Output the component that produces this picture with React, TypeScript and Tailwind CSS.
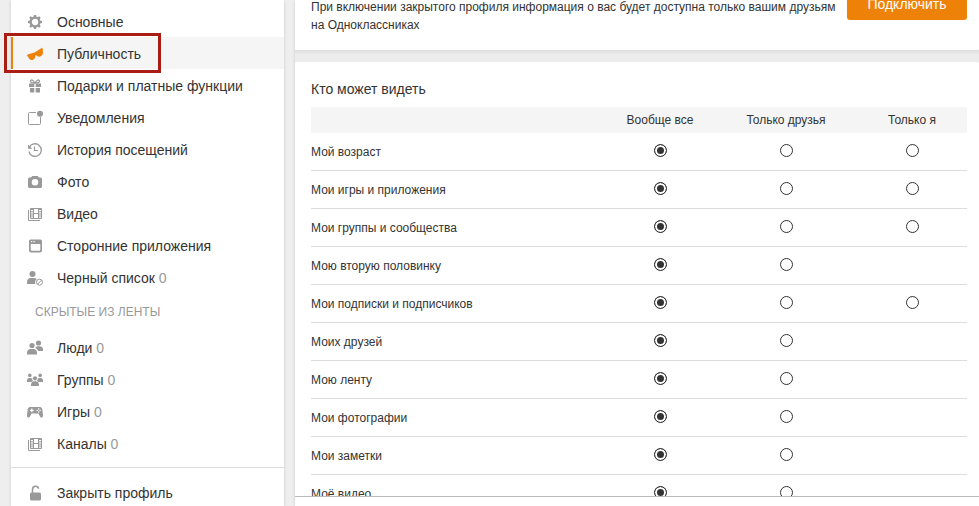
import React from 'react';

type MenuItem = {
    label: string;
    icon: React.ReactNode;
    count?: number;
    active?: boolean;
};

const Icon = ({ children }: { children: React.ReactNode }) => (
    <svg viewBox="0 0 16 16" className="size-4 shrink-0" fill="currentColor" aria-hidden="true">
        {children}
    </svg>
);

const gearTeeth = [0, 45, 90, 135, 180, 225, 270, 315];

const GearIcon = () => (
    <Icon>
        {gearTeeth.map((angle) => (
            <path key={angle} d="M6.3 3.6 6.9 1h2.200l.6 2.600z" transform={`rotate(${angle} 8 8)`} />
        ))}
        <circle cx="8" cy="8" r="4.300" fill="none" stroke="currentColor" strokeWidth="2.200" />
    </Icon>
);

const GlassesIcon = () => (
    <Icon>
        <path d="M0 9.500c.2-.8.6-1.100 1.400-1.300L7.500 6.600l2-1.400L14.700 2c.5-.3.800-.1.900.4l.4 3.600c0 2.600-1.200 4.200-3 4.600-1.700.4-3-.2-3.900-1.600l-.7.400c.1 2.200-.8 3.900-2.700 4.500-2 .6-3.500-.3-4.200-2.300z" />
    </Icon>
);

const GiftIcon = () => (
    <Icon>
        <path d="M2 5.500h5.300V9H2zM8.700 5.500H14V9H8.700zM3 10h4.300v4.500H3zM8.700 10H13v4.500H8.700z" />
        <path d="M7.600 5C4.500 5 3.500 4.300 3.500 3.200c0-1.900 3.300-1.700 4.100 1.800zM8.400 5c3.100 0 4.100-.7 4.100-1.800 0-1.900-3.300-1.700-4.100 1.800z" fill="none" stroke="currentColor" strokeWidth="1.300" />
    </Icon>
);

const NotifyIcon = () => (
    <Icon>
        <path d="M9 2.500H2.500a1 1 0 0 0-1 1v10a1 1 0 0 0 1 1h10a1 1 0 0 0 1-1V7" fill="none" stroke="currentColor" />
        <circle cx="13" cy="3.700" r="3" />
    </Icon>
);

const HistoryIcon = () => (
    <Icon>
        <path d="M2.300 5.500a6.300 6.300 0 1 1-.4 4" fill="none" stroke="currentColor" strokeWidth="1.300" />
        <path d="M1 2.500v4.300h4.300z" />
        <path d="M7.500 4.500v4h3.500" fill="none" stroke="currentColor" strokeWidth="1.200" />
    </Icon>
);

const CameraIcon = () => (
    <Icon>
        <path fillRule="evenodd" d="M5.200 2h5.600l1.200 1.500h1.500A1.500 1.500 0 0 1 15 5v7.500a1.500 1.500 0 0 1-1.500 1.500h-11A1.500 1.500 0 0 1 1 12.500V5a1.500 1.500 0 0 1 1.500-1.500H4zM8 5a3.300 3.300 0 1 0 0 6.600A3.300 3.300 0 0 0 8 5z" />
    </Icon>
);

const FilmIcon = () => (
    <Icon>
        <path d="M1.500 4v10.500H13" fill="none" stroke="currentColor" />
        <path d="M3.500 2.500h11v10h-11zM6.500 2.500v10M11.500 2.500v10M6.500 7.500h5" fill="none" stroke="currentColor" />
        <path d="M5 3v9.500M13 3v9.500" fill="none" stroke="currentColor" strokeWidth="2" strokeDasharray="1 1.200" />
    </Icon>
);

const WindowIcon = () => (
    <Icon>
        <path fillRule="evenodd" d="M3.500 1.500h10A1.500 1.500 0 0 1 15 3v9.500a2 2 0 0 1-2 2H4a2 2 0 0 1-2-2V3a1.500 1.500 0 0 1 1.500-1.500zM3.700 6v5.800a1 1 0 0 0 1 1h7.600a1 1 0 0 0 1-1V6zM4 3v1.200h1.200V3zM6.500 3v1.200h1.200V3z" />
    </Icon>
);

const BlockedIcon = () => (
    <Icon>
        <circle cx="5.500" cy="4" r="3" />
        <path d="M0 14v-2c0-2.500 1.800-4 4-4h3c1.200 0 2.200.4 2.900 1.100A4.500 4.500 0 0 0 8.300 14z" />
        <circle cx="12.500" cy="12.200" r="3" fill="none" stroke="currentColor" />
        <path d="m10.500 14.200 4-4" stroke="currentColor" />
    </Icon>
);

const PeopleIcon = () => (
    <Icon>
        <circle cx="5" cy="5.500" r="2.600" />
        <path d="M0 14.500V13c0-2.400 1.500-4 3.500-4h3c2 0 3.500 1.600 3.500 4v1.500z" />
        <circle cx="11.500" cy="3" r="2.600" />
        <path d="M8.300 8c.6-1.200 1.500-1.800 2.700-1.800h1.500c2.100 0 3.500 1.200 3.500 3.300V11h-5c-.3-1.500-1.200-2.500-2.700-3z" />
    </Icon>
);

const GroupIcon = () => (
    <Icon>
        <circle cx="2.800" cy="3.400" r="1.800" />
        <circle cx="13.200" cy="3.400" r="1.800" />
        <circle cx="8" cy="6.300" r="2.100" />
        <path d="M4 14v-1c0-2 1.300-3.700 3-3.700h2c1.700 0 3 1.700 3 3.700v1zM0 10V8.500c0-1.600 1-2.500 2.300-2.500h1.200c.8 0 1.200.2 1.600.6 0 1.200.4 1.700.9 2.200L4.500 10zM16 10V8.500c0-1.600-1-2.500-2.300-2.500h-1.200c-.8 0-1.200.2-1.600.6 0 1.200-.4 1.700-.9 2.200l1.500 1.200z" />
    </Icon>
);

const GamepadIcon = () => (
    <Icon>
        <path fillRule="evenodd" d="M3 3h10c1.300 0 2 1 2.300 2.500L16 11c.1 1.500-.4 2.500-1.500 2.500S12.700 12.300 12 10.500c-.3-.7-.7-1-1.500-1h-5c-.8 0-1.200.3-1.500 1-.7 1.800-1.400 3-2.500 3S-.1 12.500 0 11l.7-5.500C1 4 1.700 3 3 3zm1.200 1.500v1.300H3v1.200h1.200v1.300h1.200V7h1.300V5.800H5.400V4.500zM11 4.200v1.300h1.300V4.200zM9.500 5.700V7h1.300V5.700zM12.500 5.700V7h1.300V5.700zM11 7.200v1.300h1.300V7.200z" />
    </Icon>
);

const LockIcon = () => (
    <Icon>
        <rect x="3" y="7.500" width="11" height="8" rx="1.500" />
        <path d="M5.500 8V4.500C5.500 2.500 6.500 1.200 8.500 1.200s2.900 1 3 2.500" fill="none" stroke="currentColor" strokeWidth="1.500" />
    </Icon>
);

const mainMenu: MenuItem[] = [
    { label: 'Основные', icon: <GearIcon /> },
    { label: 'Публичность', icon: <GlassesIcon />, active: true },
    { label: 'Подарки и платные функции', icon: <GiftIcon /> },
    { label: 'Уведомления', icon: <NotifyIcon /> },
    { label: 'История посещений', icon: <HistoryIcon /> },
    { label: 'Фото', icon: <CameraIcon /> },
    { label: 'Видео', icon: <FilmIcon /> },
    { label: 'Сторонние приложения', icon: <WindowIcon /> },
    { label: 'Черный список', icon: <BlockedIcon />, count: 0 },
];

const hiddenMenu: MenuItem[] = [
    { label: 'Люди', icon: <PeopleIcon />, count: 0 },
    { label: 'Группы', icon: <GroupIcon />, count: 0 },
    { label: 'Игры', icon: <GamepadIcon />, count: 0 },
    { label: 'Каналы', icon: <FilmIcon />, count: 0 },
];

const columns = ['Вообще все', 'Только друзья', 'Только я'];

// options: how many of the columns can be picked for the row
const settings = [
    { name: 'Мой возраст', options: 3 },
    { name: 'Мои игры и приложения', options: 3 },
    { name: 'Мои группы и сообщества', options: 3 },
    { name: 'Мою вторую половинку', options: 2 },
    { name: 'Мои подписки и подписчиков', options: 3 },
    { name: 'Моих друзей', options: 2 },
    { name: 'Мою ленту', options: 2 },
    { name: 'Мои фотографии', options: 2 },
    { name: 'Мои заметки', options: 2 },
    { name: 'Моё видео', options: 2 },
];

const MenuLink = ({ item }: { item: MenuItem }) => (
    <li className="relative">
        <a
            href="#"
            className={`flex h-8 items-center gap-[14px] pt-0.5 text-sm ${item.active ? 'border-l-2 border-[#ee8208] bg-[#f5f5f5] pl-[14px]' : 'pl-4'}`}
        >
            <span className={item.active ? 'text-[#ee8208]' : 'text-[#999]'}>{item.icon}</span>
            <span>
                {item.label}
                {item.count !== undefined && <span className="text-[#999]"> {item.count}</span>}
            </span>
        </a>
        {item.active && (
            <div className="pointer-events-none absolute -left-[7px] -top-1 h-10 w-[157px] border-3 border-[#a91d14]" />
        )}
    </li>
);

const Sidebar = () => (
    <nav className="w-[273px] shrink-0 bg-white pt-[5px] shadow-[0_1px_3px_rgba(0,0,0,0.15)]">
        <ul>
            {mainMenu.map((item) => <MenuLink key={item.label} item={item} />)}
        </ul>
        <h2 className="flex h-[38px] items-center pl-6 text-xs text-[#999]">СКРЫТЫЕ ИЗ ЛЕНТЫ</h2>
        <ul>
            {hiddenMenu.map((item) => <MenuLink key={item.label} item={item} />)}
        </ul>
        <ul className="mt-2 border-t border-[#ddd] pt-2">
            <MenuLink item={{ label: 'Закрыть профиль', icon: <LockIcon /> }} />
        </ul>
    </nav>
);

const ClosedProfileCard = () => (
    <section className="flex h-[50px] shrink-0 items-end overflow-hidden rounded-b-xs bg-white pl-4 pr-3">
        <p className="flex-1 pb-4 text-xs leading-[18px]">
            При включении закрытого профиля информация о вас будет доступна только вашим друзьям
            <br />
            на Одноклассниках
        </p>
        <div className="pb-[30px]">
            <button type="button" className="block h-8 w-[120px] rounded-[3px] bg-[#ee8208] text-sm text-white">
                Подключить
            </button>
        </div>
    </section>
);

const VisibilityCard = () => (
    <section className="min-h-0 flex-1 overflow-hidden rounded-t-xs bg-white pl-4 pr-3 pt-[17px]">
        <h1 className="mb-2 text-sm leading-5">Кто может видеть</h1>
        <table className="w-full table-fixed border-separate border-spacing-0 text-xs">
            <thead>
                <tr className="h-[26px] bg-[#f5f5f5]">
                    <td />
                    {columns.map((column, i) => (
                        <th key={column} scope="col" className={`font-normal ${i === 2 ? 'w-[118px] pl-2' : 'w-[126px]'}`}>
                            {column}
                        </th>
                    ))}
                </tr>
            </thead>
            <tbody>
                {settings.map((row, r) => (
                    <tr key={row.name} className="h-[38px]">
                        <th scope="row" className="border-b border-[#ddd] text-left font-normal">{row.name}</th>
                        {columns.map((column, i) => (
                            <td key={column} className={`border-b border-[#ddd] pb-0.5 ${i === 2 ? 'pl-2' : ''}`}>
                                {i < row.options && (
                                    <input
                                        type="radio"
                                        name={`visibility-${r}`}
                                        aria-label={`${row.name}: ${column}`}
                                        defaultChecked={i === 0}
                                        className="mx-auto block size-[13px] appearance-none rounded-full border border-[#333] bg-white checked:bg-[#333] checked:shadow-[inset_0_0_0_2px_#fff]"
                                    />
                                )}
                            </td>
                        ))}
                    </tr>
                ))}
            </tbody>
        </table>
    </section>
);

const App = () => {
    return (
        <div className="flex h-screen gap-[11px] overflow-hidden bg-[#eee] pl-[11px] font-['Liberation_Sans',Arial,sans-serif] text-[#333]">
            <Sidebar />
            <main className="flex min-w-0 flex-1 flex-col shadow-[0_1px_3px_rgba(0,0,0,0.15)]">
                <ClosedProfileCard />
                <div className="h-3 shrink-0 bg-gradient-to-b from-[#dfdfdf] to-[#ececec] to-40%" />
                <VisibilityCard />
                <div className="h-[10px] shrink-0 border-t border-[#bbb] bg-white" />
            </main>
        </div>
    );
};

export default App;
